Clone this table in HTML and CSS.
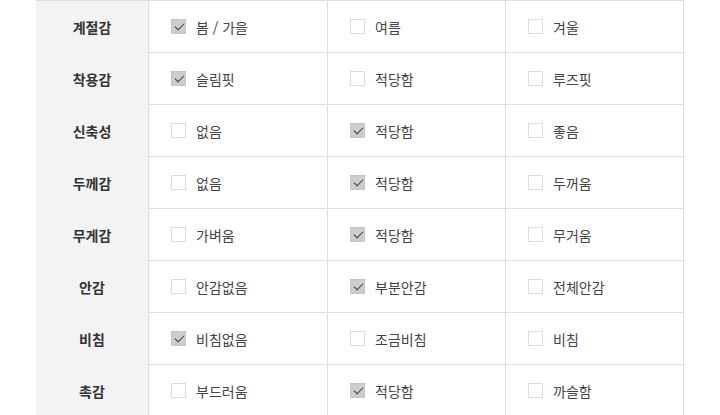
FILE: index.html
```html
<!DOCTYPE html>
<html lang="ko">
<head>
<meta charset="utf-8">
<link rel="stylesheet" href="styles.css">
</head>
<body>
<div class="spec">
  <div class="row">
    <div class="label">계절감</div>
    <div class="opt"><span class="box on"></span>봄 / 가을</div>
    <div class="opt"><span class="box"></span>여름</div>
    <div class="opt"><span class="box"></span>겨울</div>
  </div>
  <div class="row">
    <div class="label">착용감</div>
    <div class="opt"><span class="box on"></span>슬림핏</div>
    <div class="opt"><span class="box"></span>적당함</div>
    <div class="opt"><span class="box"></span>루즈핏</div>
  </div>
  <div class="row">
    <div class="label">신축성</div>
    <div class="opt"><span class="box"></span>없음</div>
    <div class="opt"><span class="box on"></span>적당함</div>
    <div class="opt"><span class="box"></span>좋음</div>
  </div>
  <div class="row">
    <div class="label">두께감</div>
    <div class="opt"><span class="box"></span>없음</div>
    <div class="opt"><span class="box on"></span>적당함</div>
    <div class="opt"><span class="box"></span>두꺼움</div>
  </div>
  <div class="row">
    <div class="label">무게감</div>
    <div class="opt"><span class="box"></span>가벼움</div>
    <div class="opt"><span class="box on"></span>적당함</div>
    <div class="opt"><span class="box"></span>무거움</div>
  </div>
  <div class="row">
    <div class="label">안감</div>
    <div class="opt"><span class="box"></span>안감없음</div>
    <div class="opt"><span class="box on"></span>부분안감</div>
    <div class="opt"><span class="box"></span>전체안감</div>
  </div>
  <div class="row">
    <div class="label">비침</div>
    <div class="opt"><span class="box on"></span>비침없음</div>
    <div class="opt"><span class="box"></span>조금비침</div>
    <div class="opt"><span class="box"></span>비침</div>
  </div>
  <div class="row">
    <div class="label">촉감</div>
    <div class="opt"><span class="box"></span>부드러움</div>
    <div class="opt"><span class="box on"></span>적당함</div>
    <div class="opt"><span class="box"></span>까슬함</div>
  </div>
</div>
</body>
</html>
```
FILE: styles.css
```css
html, body {
  margin: 0;
  padding: 0;
  background: #fff;
}
body {
  font-family: "Noto Sans CJK KR", "Noto Sans", sans-serif;
  font-size: 14px;
  color: #444;
}
.spec {
  margin-left: 36px;
  width: 648px;
  border-top: 1px solid #ddd;
}
.row {
  display: grid;
  grid-template-columns: 112px 179px 178px 179px;
}
.label {
  background: #f3f3f3;
  height: 52px;
  display: flex;
  align-items: center;
  justify-content: center;
  font-weight: bold;
  color: #333;
}
.opt {
  box-sizing: border-box;
  height: 52px;
  border-left: 1px solid #ddd;
  border-bottom: 1px solid #ddd;
  display: flex;
  align-items: center;
  padding-left: 22px;
}
.opt:last-child {
  border-right: 1px solid #ddd;
}
.box {
  box-sizing: border-box;
  width: 15px;
  height: 15px;
  border: 1px solid #dcdcdc;
  background: #fff;
  margin-right: 10px;
  position: relative;
}
.box.on {
  background: #cdcdcd;
  border-color: #c4c4c4;
}
.box.on::after {
  content: "";
  position: absolute;
  left: 3px;
  top: 3px;
  width: 8px;
  height: 4px;
  border-left: 1.6px solid #3c3c3c;
  border-bottom: 1.6px solid #3c3c3c;
  transform: rotate(-45deg);
  transform-origin: center;
}
```
